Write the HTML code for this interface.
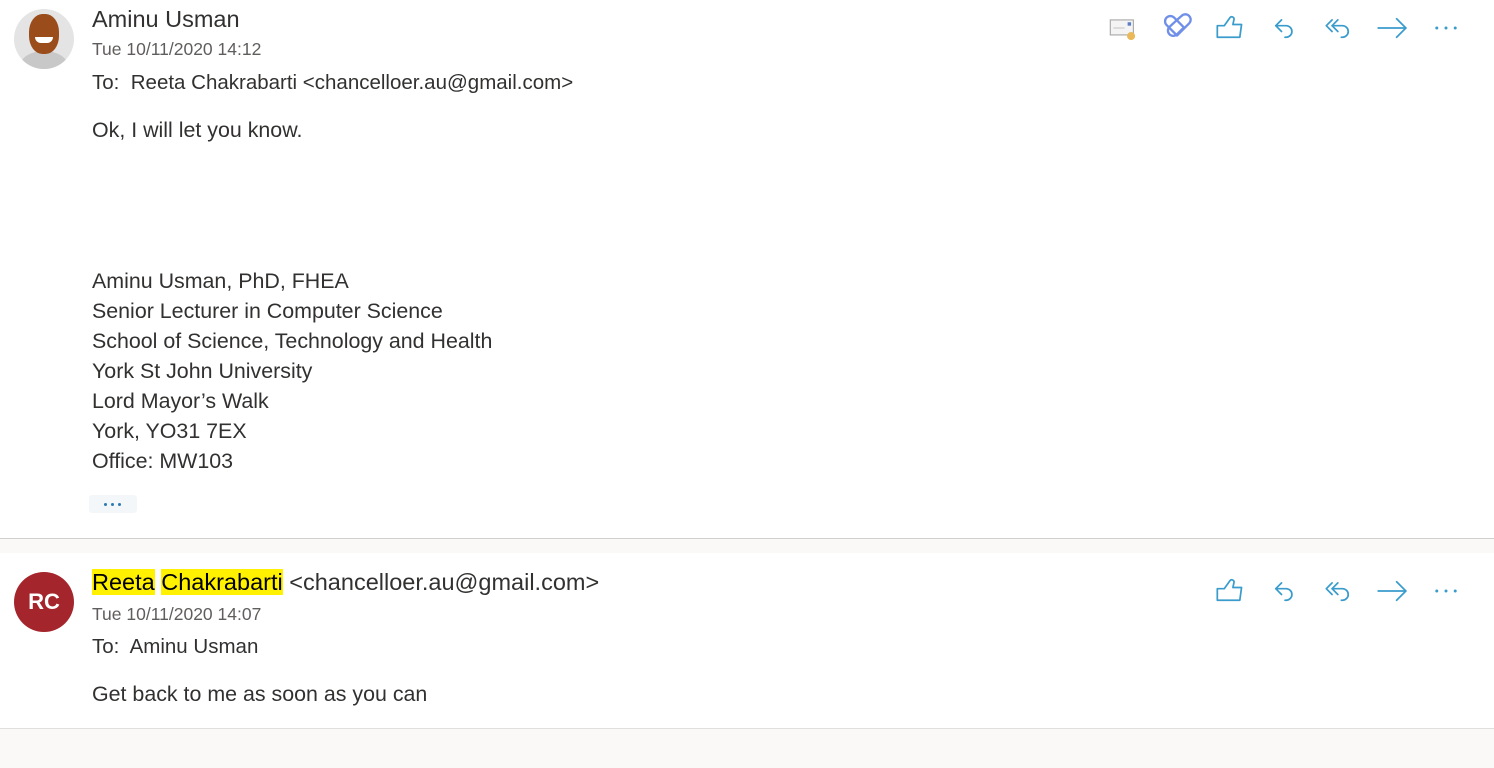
<!DOCTYPE html>
<html><head><meta charset="utf-8"><style>
*{margin:0;padding:0;box-sizing:border-box}
body{width:1494px;height:768px;background:#faf9f8;font-family:"Liberation Sans",sans-serif;color:#323130;position:relative;overflow:hidden}
.card{position:absolute;left:0;width:1494px;background:#fff}
.abs{position:absolute;white-space:nowrap}
.ic{position:absolute;width:30px;height:30px}
.ic path,.ic polyline,.ic line{fill:none;stroke:#3a9ccc;stroke-width:1.5;stroke-linecap:round;stroke-linejoin:round}
</style></head><body>
<div class="card" style="top:0;height:539px;border-bottom:1px solid #d2d0ce">
  <div class="abs" style="left:14px;top:9px;width:60px;height:60px;border-radius:50%;overflow:hidden;background:#e4e4e4">
    <div style="position:absolute;left:6px;top:42px;width:48px;height:30px;border-radius:50%;background:#c8c8c8"></div>
    <div style="position:absolute;left:15px;top:5px;width:30px;height:40px;border-radius:45%;background:#9a4c1a"></div>
    <div style="position:absolute;left:21px;top:28px;width:18px;height:6px;border-radius:0 0 9px 9px;background:#fff"></div>
  </div>
  <div class="abs" style="left:92px;top:6px;font-size:23.5px">Aminu Usman</div>
  <div class="abs" style="left:92px;top:39px;font-size:17.5px;color:#605e5c">Tue 10/11/2020 14:12</div>
  <div class="abs" style="left:92px;top:71px;font-size:20.5px">To:&nbsp; Reeta Chakrabarti &lt;chancelloer.au@gmail.com&gt;</div>
  <div class="abs" style="left:92px;top:118px;font-size:21.4px">Ok, I will let you know.</div>
  <div class="abs" style="left:92px;top:266px;font-size:21.4px;line-height:30px">Aminu Usman, PhD, FHEA<br>Senior Lecturer in Computer Science<br>School of Science, Technology and Health<br>York St John University<br>Lord Mayor’s Walk<br>York, YO31 7EX<br>Office: MW103</div>
  <div class="abs" style="left:89px;top:495px;width:48px;height:18px;background:#f3f7fa;border-radius:3px">
    <span style="position:absolute;left:15px;top:8px;width:3px;height:3px;border-radius:50%;background:#2a7ab0"></span>
    <span style="position:absolute;left:22px;top:8px;width:3px;height:3px;border-radius:50%;background:#2a7ab0"></span>
    <span style="position:absolute;left:29px;top:8px;width:3px;height:3px;border-radius:50%;background:#2a7ab0"></span>
  </div>
  <svg class="ic" style="left:1108px;top:13px" viewBox="0 0 26 26"><rect x="2" y="6" width="20" height="13" fill="#f4f4f4" stroke="#aaa" stroke-width="1"/><rect x="17" y="8" width="3" height="3" fill="#5b7fc7"/><line x1="5" y1="13" x2="14" y2="13" style="stroke:#ccc;stroke-width:1"/><circle cx="20" cy="20" r="3.5" fill="#e9b95a"/></svg>
  <svg class="ic" style="left:1162px;top:13px" viewBox="0 0 26 26"><path d="M13 6 L17 2.5 a4.5 4.5 0 0 1 6.5 6.5 L13 19.5 L4 10.5 a4.5 4.5 0 0 1 6.5-6.5 L19 12.5 L13 18.5 a4.5 4.5 0 0 1-6.5-6.5 Z" style="stroke:#6f8fe8;stroke-width:2"/></svg>
  <svg class="ic" style="left:1215px;top:13px" viewBox="0 0 26 26"><path d="M2 11 H8 L13 4 a2 2 0 0 1 3.5 1.5 L15.5 10 H23 L21.5 21 H7 L2 21 Z"/></svg>
  <svg class="ic" style="left:1270px;top:13px" viewBox="0 0 26 26"><polyline points="10,6 5,11 10,16"/><path d="M5 11 H14 a5 5 0 0 1 0 10 H13"/></svg>
  <svg class="ic" style="left:1324px;top:13px" viewBox="0 0 26 26"><polyline points="7,6 2,11 7,16"/><polyline points="12,6 7,11 12,16"/><path d="M7 11 H16 a5 5 0 0 1 0 10 H15"/></svg>
  <svg class="ic" style="left:1377px;top:13px" viewBox="0 0 26 26"><line x1="1" y1="13" x2="25" y2="13"/><polyline points="17,5 25,13 17,21"/></svg>
  <svg class="ic" style="left:1431px;top:13px" viewBox="0 0 26 26"><circle cx="5" cy="13" r="1.3" fill="#3a9ccc"/><circle cx="13" cy="13" r="1.3" fill="#3a9ccc"/><circle cx="21" cy="13" r="1.3" fill="#3a9ccc"/></svg>
</div>
<div class="card" style="top:553px;height:176px;border-bottom:1px solid #e1dfdd">
  <div class="abs" style="left:14px;top:19px;width:60px;height:60px;border-radius:50%;background:#a4262c;color:#fff;font-size:22px;font-weight:bold;text-align:center;line-height:60px">RC</div>
  <div class="abs" style="left:92px;top:16px;font-size:23.5px"><span style="background:#fff100;color:#000">Reeta</span> <span style="background:#fff100;color:#000">Chakrabarti</span> &lt;chancelloer.au@gmail.com&gt;</div>
  <div class="abs" style="left:92px;top:51px;font-size:17.5px;color:#605e5c">Tue 10/11/2020 14:07</div>
  <div class="abs" style="left:92px;top:82px;font-size:20.5px">To:&nbsp; Aminu Usman</div>
  <div class="abs" style="left:92px;top:129px;font-size:21.4px">Get back to me as soon as you can</div>
  <svg class="ic" style="left:1215px;top:23px" viewBox="0 0 26 26"><path d="M2 11 H8 L13 4 a2 2 0 0 1 3.5 1.5 L15.5 10 H23 L21.5 21 H7 L2 21 Z"/></svg>
  <svg class="ic" style="left:1270px;top:23px" viewBox="0 0 26 26"><polyline points="10,6 5,11 10,16"/><path d="M5 11 H14 a5 5 0 0 1 0 10 H13"/></svg>
  <svg class="ic" style="left:1324px;top:23px" viewBox="0 0 26 26"><polyline points="7,6 2,11 7,16"/><polyline points="12,6 7,11 12,16"/><path d="M7 11 H16 a5 5 0 0 1 0 10 H15"/></svg>
  <svg class="ic" style="left:1377px;top:23px" viewBox="0 0 26 26"><line x1="1" y1="13" x2="25" y2="13"/><polyline points="17,5 25,13 17,21"/></svg>
  <svg class="ic" style="left:1431px;top:23px" viewBox="0 0 26 26"><circle cx="5" cy="13" r="1.3" fill="#3a9ccc"/><circle cx="13" cy="13" r="1.3" fill="#3a9ccc"/><circle cx="21" cy="13" r="1.3" fill="#3a9ccc"/></svg>
</div>
</body></html>
